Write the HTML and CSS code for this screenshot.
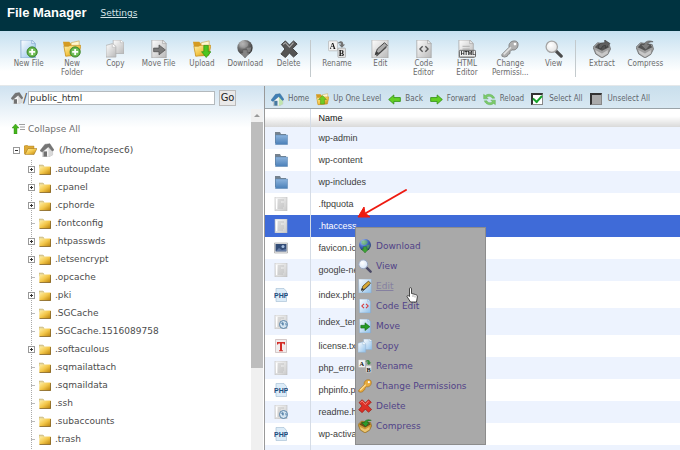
FILE: index.html
```html
<!DOCTYPE html>
<html lang="en">
<head>
<meta charset="utf-8">
<title>File Manager</title>
<link rel="stylesheet" href="styles.css">
</head>
<body>
<svg class="defs" aria-hidden="true">
  <defs>
    <linearGradient id="gPage" x1="0" y1="0" x2="1" y2="1"><stop offset="0" stop-color="#fdfeff"/><stop offset="1" stop-color="#8fc0ea"/></linearGradient>
    <linearGradient id="gGold" x1="0" y1="0" x2="1" y2="1"><stop offset="0" stop-color="#fff0a8"/><stop offset=".5" stop-color="#f3c74a"/><stop offset="1" stop-color="#b98009"/></linearGradient>
    <linearGradient id="gBlue" x1="0" y1="0" x2="0" y2="1"><stop offset="0" stop-color="#8db4dd"/><stop offset="1" stop-color="#4a7fb8"/></linearGradient>
    <linearGradient id="gDoc" x1="0" y1="0" x2="1" y2="1"><stop offset="0" stop-color="#f8f8f8"/><stop offset="1" stop-color="#cacaca"/></linearGradient>
    <radialGradient id="gGlobe" cx=".35" cy=".25" r=".8"><stop offset="0" stop-color="#c9dcff"/><stop offset=".45" stop-color="#4a70cc"/><stop offset="1" stop-color="#1b3266"/></radialGradient>
    <radialGradient id="gLens" cx=".4" cy=".35" r=".7"><stop offset="0" stop-color="#fff"/><stop offset="1" stop-color="#d3e3f8"/></radialGradient>
  </defs>
  <symbol id="page" viewBox="0 0 20 20"><path d="M2 0h12l4 4v16H2z" fill="url(#gPage)" stroke="#7fa6cd" stroke-width=".8"/><path d="M14 0v4h4z" fill="#e8f2fb" stroke="#7fa6cd" stroke-width=".7"/></symbol>
  <symbol id="plus" viewBox="0 0 20 20"><circle cx="13.500" cy="13.300" r="5.700" fill="#5cab45" stroke="#3a8428"/><circle cx="13.500" cy="13.300" r="4.200" fill="#77c25e"/><path d="M13.500 10v6.600M10.200 13.300h6.600" stroke="#fff" stroke-width="2"/></symbol>
  <symbol id="newfile" viewBox="0 0 20 20"><use href="#page" x="-1"/><use href="#plus"/></symbol>
  <symbol id="goldopen" viewBox="0 0 20 20"><path d="M0 2h7l1.500 2H15v3h4l-3 10L3 18z" fill="#d59b21"/><path d="M9 3l9-2v8l-9 4z" fill="#fff6ce" stroke="#c99b35" stroke-width=".6"/><path d="M3 18L1 7l5 0 2-1h12l-2.500 11z" fill="url(#gGold)" stroke="#c18a1c" stroke-width=".7"/></symbol>
  <symbol id="newfolder" viewBox="0 0 20 20"><use href="#goldopen"/><use href="#plus"/></symbol>
  <symbol id="upload" viewBox="0 0 20 20"><use href="#goldopen"/><path d="M12 6h5v7h3l-5.300 6.500L9.500 13H12z" fill="#4cc51f" stroke="#2a8c0c" stroke-width=".7"/></symbol>
  <symbol id="copy" viewBox="0 0 20 20"><path d="M8 0h8l4 3v12H8z" fill="url(#gPage)" stroke="#8fb1d2" stroke-width=".8"/><path d="M0 6l7-2 4 3v12H0z" fill="url(#gPage)" stroke="#8fb1d2" stroke-width=".8"/><path d="M7 4v4h4M16 0v3h4" fill="#fff" stroke="#8fb1d2" stroke-width=".6"/></symbol>
  <symbol id="move" viewBox="0 0 20 20"><use href="#page"/><path d="M4 9h6V5.500L17 11l-7 5.500V13H4z" fill="#269b25" stroke="#14630f" stroke-width=".8"/></symbol>
  <symbol id="download" viewBox="0 0 20 20"><circle cx="10" cy="8.500" r="8.500" fill="url(#gGlobe)"/><path d="M5 3c3-2 7-1 9 0l-1 4-4 2-4-2zM12 9l5-1-1 5-4 2z" fill="#62b84c" opacity=".6"/><path d="M7.500 11h5v3.500H15L10 20l-5-5.500h2.500z" fill="#3fa236" stroke="#225e22" stroke-width=".5"/></symbol>
  <symbol id="delete" viewBox="0 0 20 20"><path d="M1.500 5L6 1l4.500 4.500L15 1l4 3.500-5 5 5.500 5.500-4.500 4-4.500-4.500L6 19.500 1 15.500 5.500 10z" fill="#dc3026" stroke="#96140e" stroke-width=".9"/><path d="M3.500 5L6 3l4.500 5L15 3" fill="none" stroke="#f6948b" stroke-width="1.200"/></symbol>
  <symbol id="rename" viewBox="0 0 20 20"><rect x=".5" y="1" width="10" height="11" rx="1" fill="#f3f3f3" stroke="#aaa" stroke-width=".7"/><rect x="11" y="9" width="8.500" height="10.500" rx="1" fill="#e2e2e2" stroke="#999" stroke-width=".7"/><path d="M11 3c3-3 6-2 6 2h2l-3.500 3.500L12 5h2.500c0-1.500-1-2-3.500-1z" fill="#348a3c"/></symbol>
  <symbol id="edit" viewBox="0 0 20 20"><path d="M1 0h18v20H1z" fill="url(#gPage)" stroke="#8aa9c8" stroke-width=".7"/><path d="M5 16l2-6 8-7 3 3-8 8z" fill="#d9aa35" stroke="#4c3a18" stroke-width="1"/><path d="M5 16l1-3 2 2zM6 18L17 8" fill="#222" stroke="#444" stroke-width="1.200"/></symbol>
  <symbol id="code" viewBox="0 0 20 20"><use href="#page"/><path d="M8.500 7L5.500 10l3 3M11.500 7l3 3-3 3" fill="none" stroke="#da3434" stroke-width="1.500"/></symbol>
  <symbol id="html" viewBox="0 0 20 20"><use href="#page" x="-1"/><path d="M5 7h8M5 10h8" stroke="#aaa"/><rect x="1.500" y="11.500" width="18" height="7.500" rx="1" fill="#eee" stroke="#555"/></symbol>
  <symbol id="key" viewBox="0 0 20 20"><path d="M1 16L9 8C8 4 11 1 15 1c3 0 4 2 4 4 0 4-3 7-7 6l-2 2v2l-2 1-1 2-3 1-3-1z" fill="#e8ab3d" stroke="#9f6813" stroke-width=".8"/><circle cx="15.500" cy="4.500" r="1.500" fill="#fff"/><path d="M3 16l8-8" stroke="#ffe09a" stroke-width="1.800"/></symbol>
  <symbol id="view" viewBox="0 0 20 20"><path d="M11.500 11.500L18 18" stroke="#4a4a66" stroke-width="3.500" stroke-linecap="round"/><circle cx="7.500" cy="7.500" r="6.300" fill="url(#gLens)" stroke="#98a5c0" stroke-width="1.400"/></symbol>
  <symbol id="box" viewBox="0 0 20 20"><path d="M0 8l5-5 13 2 1.500 5-3 6-6.500 4L3 15.500z" fill="#cd9a35" stroke="#7b5812" stroke-width=".7"/><path d="M2 8l8 4 8-4-2-3-10-1z" fill="#6f4f1a"/><path d="M2.500 11l7.500 4 6.500-4v4l-6.500 4-6-4z" fill="#ecc673"/></symbol>
  <symbol id="compress" viewBox="0 0 20 20"><use href="#box"/><path d="M19 2c-4-2-9-1-10 3H5l6 6 5-6h-3c0-2 2-3 6-3z" fill="#2d9a2c" stroke="#155f14" stroke-width=".6"/></symbol>
  <symbol id="extract" viewBox="0 0 20 20"><use href="#box"/><path d="M6 9c0-5 3-6 7-6V0l6 4-5 5V6c-3 0-4 1-5 4z" fill="#2a7528" stroke="#123b12" stroke-width=".6"/></symbol>
  <symbol id="home" viewBox="0 0 20 20"><path d="M4 9l8-5 6 5v8l-6 3H4z" fill="#f4f4f4" stroke="#9b9b9b" stroke-width=".7"/><path d="M12 5l6 5v7l-6 3z" fill="#bfe5ae"/><path d="M0 11L7 2l7-1 6 9-2.500 1.500L12 5.500 3 13z" fill="#3f7fb5" stroke="#2c6190" stroke-width=".6"/><path d="M5 12h5v7.500H5z" fill="#45799f"/></symbol>
  <symbol id="back" viewBox="0 0 20 20"><path d="M1 10l8-7v4h10v6H9v4z" fill="#62cf25" stroke="#2d8e10" stroke-width="1.200"/></symbol>
  <symbol id="forward" viewBox="0 0 20 20"><path d="M19 10l-8-7v4H1v6h10v4z" fill="#62cf25" stroke="#2d8e10" stroke-width="1.200"/></symbol>
  <symbol id="up" viewBox="0 0 20 20"><use href="#goldopen"/><path d="M10 4l6 6h-3v7H7v-7H4z" fill="#70cb25" stroke="#4a9616" stroke-width=".8"/></symbol>
  <symbol id="reload" viewBox="0 0 20 20"><path d="M1 2v7h7L5.500 6.500C9 4 13 5 14 8h4C16 2 8 0 3.500 4zM19 18v-7h-7l2.500 2.500C11 16 7 15 6 12H2c2 6 10 8 14.500 4z" fill="#7cca6a" stroke="#4ea445" stroke-width=".6"/></symbol>
  <symbol id="collapse" viewBox="0 0 13 10"><path d="M3.500 0L7 4H5v6H2V4H0z" fill="#46b51c" stroke="#27830d" stroke-width=".4"/><path d="M7 .5h6M8 3h5M8 5.500h5" stroke="#888" stroke-width=".8"/></symbol>
  <symbol id="folder" viewBox="0 0 12 11"><path d="M0 1h4l1 1v2H0z" fill="#e0d29c" stroke="#b3a05c" stroke-width=".4"/><path d="M.3 2.500h11.400v8H.3z" fill="url(#gGold)"/><path d="M11.600 3v7.600H.5" fill="none" stroke="#775614" stroke-width=".8"/></symbol>
  <symbol id="openfolder" viewBox="0 0 13 10"><path d="M0 9V1l3-1 1 1h6v3z" fill="#dca936" stroke="#a6791a" stroke-width=".4"/><path d="M1 9.600L4 3.500h9L10 9.600z" fill="url(#gGold)" stroke="#9b6d10" stroke-width=".5"/></symbol>
  <symbol id="bluefolder" viewBox="0 0 14 14"><path d="M1 1h5l1 2h5v9H1z" fill="#76828e"/><path d="M1.500 4h12v9.500H1.500z" fill="url(#gBlue)" stroke="#5581ad" stroke-width=".5"/></symbol>
  <symbol id="doc" viewBox="0 0 14 14"><path d="M1 0h12v14H1z" fill="url(#gDoc)" stroke="#bdbdbd" stroke-width=".6"/><path d="M4 3h6M4 5h3M4 7h6M4 9h6M4 11h5" stroke="#b4b4b4" stroke-width=".7"/><path d="M2.500 2v10" stroke="#fff"/></symbol>
  <symbol id="image" viewBox="0 0 14 14"><path d="M.5 2h13v10H.5z" fill="#eee" stroke="#999" stroke-width=".6"/><path d="M1.500 3h11v7.500h-11z" fill="#334c76"/><circle cx="9" cy="5.500" r="1.500" fill="#a6bfe1"/><path d="M2 10l3-3 3 2 4-1v2z" fill="#627aa5"/></symbol>
  <symbol id="phpdoc" viewBox="0 0 14 14"><path d="M2 .5h8l2.500 3v10H2z" fill="#dcecf8" stroke="#9fbbd1" stroke-width=".6"/></symbol>
  <symbol id="webdoc" viewBox="0 0 14 14"><use href="#doc"/><circle cx="9.500" cy="9.500" r="4" fill="#d5e5f1" stroke="#5983a9"/><path d="M7 8l2-1 1 2-1 2zM11 8l2 1-1 2z" fill="#5d87ad"/></symbol>
  <symbol id="textdoc" viewBox="0 0 14 14"><path d="M1.500.5h11v13h-11z" fill="#f2eded" stroke="#b9a9a9" stroke-width=".6"/><path d="M3 3h8v2.500h-1L9.500 4.500H8V11l1 .5v.7H5v-.7L6 11V4.500H4.500L4 5.500H3z" fill="#d32e28"/></symbol>
</svg>

<header class="masthead"><h1>File Manager</h1><a href="#settings">Settings</a></header>

<nav class="toolbar" aria-label="File actions">
  <div class="group seven">
    <button><svg><use href="#newfile"/></svg><span>New File</span></button>
    <button><svg><use href="#newfolder"/></svg><span>New<br>Folder</span></button>
    <button class="off"><svg><use href="#copy"/></svg><span>Copy</span></button>
    <button class="off"><svg><use href="#move"/></svg><span>Move File</span></button>
    <button><svg><use href="#upload"/></svg><span>Upload</span></button>
    <button class="off"><svg><use href="#download"/></svg><span>Download</span></button>
    <button class="off"><svg><use href="#delete"/></svg><span>Delete</span></button>
  </div>
  <div class="rule"></div>
  <div class="group six">
    <button class="off"><svg viewBox="0 0 20 20"><use href="#rename"/><text x="2" y="10" class="serif">A</text><text x="12" y="18" class="serif">B</text></svg><span>Rename</span></button>
    <button class="off"><svg><use href="#edit"/></svg><span>Edit</span></button>
    <button class="off"><svg><use href="#code"/></svg><span>Code<br>Editor</span></button>
    <button class="off"><svg viewBox="0 0 20 20"><use href="#html"/><text x="3" y="17" class="tag">HTML</text></svg><span>HTML<br>Editor</span></button>
    <button class="off"><svg><use href="#key"/></svg><span>Change<br>Permissi...</span></button>
    <button class="off"><svg><use href="#view"/></svg><span>View</span></button>
  </div>
  <div class="rule"></div>
  <div class="group two">
    <button class="off"><svg><use href="#extract"/></svg><span>Extract</span></button>
    <button class="off"><svg><use href="#compress"/></svg><span>Compress</span></button>
  </div>
</nav>

<div class="panes">
  <aside class="side">
    <form class="path">
      <label for="dir"><svg class="gray"><use href="#home"/></svg>/</label>
      <input id="dir" type="text" value="public_html">
      <button type="button">Go</button>
    </form>
    <div class="treewrap">
      <div class="treearea">
        <a class="collapse" href="#collapse"><svg><use href="#collapse"/></svg>Collapse All</a>
        <div class="root"><button class="toggle" aria-label="Collapse home"></button><svg class="open"><use href="#openfolder"/></svg><svg class="house gray"><use href="#home"/></svg><span>(/home/topsec6)</span></div>
        <ul class="tree">
          <li><button class="toggle more" aria-label="Expand"></button><svg><use href="#folder"/></svg>.autoupdate</li>
          <li><button class="toggle more" aria-label="Expand"></button><svg><use href="#folder"/></svg>.cpanel</li>
          <li><button class="toggle more" aria-label="Expand"></button><svg><use href="#folder"/></svg>.cphorde</li>
          <li><i></i><svg><use href="#folder"/></svg>.fontconfig</li>
          <li><button class="toggle more" aria-label="Expand"></button><svg><use href="#folder"/></svg>.htpasswds</li>
          <li><button class="toggle more" aria-label="Expand"></button><svg><use href="#folder"/></svg>.letsencrypt</li>
          <li><i></i><svg><use href="#folder"/></svg>.opcache</li>
          <li><button class="toggle more" aria-label="Expand"></button><svg><use href="#folder"/></svg>.pki</li>
          <li><i></i><svg><use href="#folder"/></svg>.SGCache</li>
          <li><i></i><svg><use href="#folder"/></svg>.SGCache.1516089758</li>
          <li><button class="toggle more" aria-label="Expand"></button><svg><use href="#folder"/></svg>.softaculous</li>
          <li><i></i><svg><use href="#folder"/></svg>.sqmailattach</li>
          <li><i></i><svg><use href="#folder"/></svg>.sqmaildata</li>
          <li><i></i><svg><use href="#folder"/></svg>.ssh</li>
          <li><i></i><svg><use href="#folder"/></svg>.subaccounts</li>
          <li><i></i><svg><use href="#folder"/></svg>.trash</li>
        </ul>
      </div>
      <div class="scroll"><div class="arrow"></div><div class="thumb"></div></div>
    </div>
  </aside>

  <main class="files">
    <nav class="minibar" aria-label="Navigation">
      <a href="#home"><svg><use href="#home"/></svg>Home</a>
      <a href="#up"><svg><use href="#up"/></svg>Up One Level</a>
      <a href="#back"><svg><use href="#back"/></svg>Back</a>
      <a href="#forward"><svg><use href="#forward"/></svg>Forward</a>
      <a href="#reload"><svg><use href="#reload"/></svg>Reload</a>
      <label><input type="checkbox" checked>Select All</label>
      <label><input type="checkbox">Unselect All</label>
    </nav>
    <table>
      <thead><tr><th class="ico"></th><th>Name</th></tr></thead>
      <tbody>
        <tr><td class="ico"><svg><use href="#bluefolder"/></svg></td><td>wp-admin</td></tr>
        <tr><td class="ico"><svg><use href="#bluefolder"/></svg></td><td>wp-content</td></tr>
        <tr><td class="ico"><svg><use href="#bluefolder"/></svg></td><td>wp-includes</td></tr>
        <tr><td class="ico"><svg><use href="#doc"/></svg></td><td>.ftpquota</td></tr>
        <tr class="selected"><td class="ico"><svg><use href="#doc"/></svg></td><td>.htaccess</td></tr>
        <tr><td class="ico"><svg><use href="#image"/></svg></td><td>favicon.ico</td></tr>
        <tr><td class="ico"><svg><use href="#doc"/></svg></td><td>google-ne</td></tr>
        <tr class="tall"><td class="ico"><svg viewBox="0 0 14 14"><use href="#phpdoc"/><text x="0" y="10" class="phptext">PHP</text></svg></td><td>index.php</td></tr>
        <tr class="tall"><td class="ico"><svg><use href="#webdoc"/></svg></td><td>index_tem</td></tr>
        <tr><td class="ico"><svg><use href="#textdoc"/></svg></td><td>license.txt</td></tr>
        <tr><td class="ico"><svg><use href="#doc"/></svg></td><td>php_error</td></tr>
        <tr><td class="ico"><svg viewBox="0 0 14 14"><use href="#phpdoc"/><text x="0" y="10" class="phptext">PHP</text></svg></td><td>phpinfo.p</td></tr>
        <tr><td class="ico"><svg><use href="#webdoc"/></svg></td><td>readme.h</td></tr>
        <tr><td class="ico"><svg viewBox="0 0 14 14"><use href="#phpdoc"/><text x="0" y="10" class="phptext">PHP</text></svg></td><td>wp-activa</td></tr>
        <tr><td class="ico"></td><td></td></tr>
      </tbody>
    </table>

    <div class="menu">
      <a href="#m1"><svg><use href="#download"/></svg>Download</a>
      <a href="#m2"><svg><use href="#view"/></svg>View</a>
      <a href="#m3" class="hover"><svg><use href="#edit"/></svg>Edit</a>
      <a href="#m4"><svg><use href="#code"/></svg>Code Edit</a>
      <a href="#m5"><svg><use href="#move"/></svg>Move</a>
      <a href="#m6"><svg><use href="#copy"/></svg>Copy</a>
      <a href="#m7"><svg viewBox="0 0 20 20"><use href="#rename"/><text x="2" y="10" class="serif">A</text><text x="12" y="18" class="serif">B</text></svg>Rename</a>
      <a href="#m8"><svg><use href="#key"/></svg>Change Permissions</a>
      <a href="#m9"><svg><use href="#delete"/></svg>Delete</a>
      <a href="#m10"><svg><use href="#compress"/></svg>Compress</a>
    </div>
    <svg class="pointer" viewBox="0 0 52 32"><path d="M50 2L10 25" stroke="#ee1a10" stroke-width="2" stroke-linecap="round"/><path d="M2 29L8 19l1 6 5 4z" fill="#ee1a10" stroke="#ee1a10" stroke-linejoin="round"/></svg>
    <svg class="cursor" viewBox="0 0 12 16"><path d="M3.500 1.500c0-1 2-1 2 0v5l4 1c1.500.4 2 1 1.800 2.500L10.500 15h-6L1 9.500c0-1.200 1.200-1.200 2.500 0z" fill="#fff" stroke="#222" stroke-width=".8"/><path d="M7 8v2M9 8.500v2" stroke="#555" stroke-width=".5"/></svg>
  </main>
</div>
</body>
</html>
```
FILE: styles.css
```css
* { box-sizing: border-box; }
body {
  margin: 0;
  height: 100vh;
  display: flex;
  flex-direction: column;
  overflow: hidden;
  background: #fff;
  font: 9px/12px "DejaVu Sans", sans-serif;
  color: #4c4c4c;
}
button { font: inherit; color: inherit; border: 0; padding: 0; background: none; }
a { color: inherit; text-decoration: none; }
svg { display: block; flex: none; }
.defs { position: absolute; width: 0; height: 0; }
.serif { font: bold 9px "Liberation Serif", serif; fill: #111; }
.tag { font: bold 6px "Liberation Sans", sans-serif; fill: #111; }
.phptext { font: bold 7px "Liberation Sans", sans-serif; fill: #1c4d7d; }
.gray, .off svg { filter: grayscale(1); }

.masthead {
  flex: none;
  display: flex;
  align-items: center;
  gap: 14px;
  padding: 4px 7px 9px;
  background: #003340;
  color: #fff;
}
.masthead h1 { margin: 0; font: bold 13px/18px "Liberation Sans", sans-serif; }
.masthead a { color: #d5e2e6; text-decoration: underline; }

.toolbar {
  flex: none;
  display: flex;
  padding: 9px 13px 8px 7px;
  background: linear-gradient(#c5e0f0, #fff 75%);
  border-bottom: 1px solid #e4e8ea;
  font: 8px/9px "DejaVu Sans Condensed", "Noto Sans", sans-serif;
  color: #6b6b6b;
}
.group { display: flex; min-width: 0; }
.group button { flex: 1 1 0; min-width: 0; display: flex; flex-direction: column; align-items: center; gap: 1px; white-space: nowrap; }
.group svg { width: 18px; height: 18px; }
.seven { flex: 7 1 0; }
.six { flex: 6 1 0; }
.two { flex: 2 1 0; }
.rule { width: 1px; margin-right: 4px; background: #c3cacd; }

.panes { flex: 1; min-height: 0; display: flex; }
.side {
  flex: none;
  width: 264px;
  display: flex;
  flex-direction: column;
  background: linear-gradient(#cfe2f0, #fff 42px);
}
.path { display: flex; align-items: center; gap: 1px; padding: 4px 28px 3px 11px; }
.path label { display: flex; align-items: center; font-size: 12px; }
.path svg { width: 12px; height: 12px; }
.path input {
  flex: 1;
  min-width: 0;
  height: 14px;
  border: 1px solid #b3b9bd;
  padding: 0 1px;
  font: inherit;
  color: #333;
  background: #fff;
}
.path button {
  width: 17px;
  height: 16px;
  margin-left: 3px;
  border: 1px solid #bbb;
  background: #e9e9e9;
  color: #222;
  font: 11px/14px "DejaVu Sans Condensed", "Noto Sans", sans-serif;
}
.treewrap { flex: 1; min-height: 0; display: flex; }
.treearea { flex: 1; overflow: hidden; padding: 14px 0 0 12px; }
.collapse { display: flex; align-items: center; gap: 3px; color: #707070; }
.collapse svg { width: 13px; height: 10px; }
.root { display: flex; align-items: center; height: 18px; margin: 6px 0 1px 1px; }
.root .open { width: 13px; height: 10px; margin: 0 3px 0 4px; }
.root .house { width: 14px; height: 14px; margin-right: 5px; }
.toggle {
  flex: none;
  width: 7px;
  height: 7px;
  border: 1px solid #999;
  background: linear-gradient(#333, #333) center / 3px 1px no-repeat, #fff;
}
.toggle.more {
  background: linear-gradient(#333, #333) center / 3px 1px no-repeat, linear-gradient(#333, #333) center / 1px 3px no-repeat, #fff;
}
.tree {
  list-style: none;
  margin: 0;
  padding: 0 0 40px 16px;
  background: repeating-linear-gradient(#aaa 0 1px, transparent 1px 2px) 19px 0 / 1px 100% no-repeat;
}
.tree li { display: flex; align-items: center; height: 18px; white-space: nowrap; }
.tree svg { width: 12px; height: 11px; margin: 0 4px; }
.tree i { width: 7px; height: 1px; background: linear-gradient(90deg, transparent 3px, #bbb 3px); }
.scroll { width: 12px; margin-right: 1px; background: #f0f0f0; }
.arrow { height: 13px; display: grid; place-items: center; }
.arrow::before { content: ""; border: 3px solid transparent; border-top: 0; border-bottom: 3px solid #999; }
.thumb { height: 72%; background: #bdbdbd; }

.files { position: relative; flex: 1; min-width: 0; border-left: 1px solid #999; }
.minibar {
  display: flex;
  align-items: center;
  gap: 7px;
  height: 23px;
  padding: 4px 6px 0;
  background: linear-gradient(#c9dfec, #d8e8f2);
  border-bottom: 1px solid #9aa3a8;
  font: 8px/12px "DejaVu Sans Condensed", "Noto Sans", sans-serif;
  color: #5f666c;
  white-space: nowrap;
}
.minibar a, .minibar label { display: flex; align-items: center; gap: 4px; }
.minibar label { gap: 6px; }
.minibar svg { width: 13px; height: 13px; }
.minibar input {
  appearance: none;
  width: 12px;
  height: 12px;
  margin: 0;
  border: 1px solid #888;
  border-top: 2px solid #333;
  border-left: 2px solid #333;
  background: #aaa;
  display: grid;
  place-items: center;
}
.minibar input:checked { background: #fff; }
.minibar input:checked::before {
  content: "";
  width: 7px;
  height: 4px;
  margin-bottom: 3px;
  border: solid #16a32a;
  border-width: 0 0 2px 2px;
  transform: rotate(-48deg);
}

table { width: 100%; border-collapse: collapse; font: 9px/12px "Liberation Sans", sans-serif; color: #3c3c3c; }
th { height: 18px; padding: 0 8px; text-align: left; font-weight: normal; color: #111; background: linear-gradient(#fff 40%, #d9d9d9); }
td { height: 22px; padding: 0 8px; }
.tall td { height: 27px; }
.ico { width: 45px; padding: 0 9px; border-right: 1px solid #d5dce6; }
.ico svg { width: 14px; height: 14px; }
tbody tr:nth-child(odd) { background: #edf3fe; }
tbody tr.selected { background: #3f6bd8; color: #fff; }

.menu {
  position: absolute;
  left: 90px;
  top: 141px;
  width: 131px;
  padding: 8px 2px;
  background: #a9a9a9;
  border: 1px solid #8c8c8c;
  color: #514388;
}
.menu a { display: flex; align-items: center; gap: 4px; height: 20px; white-space: nowrap; }
.menu svg { width: 14px; height: 14px; }
.menu .hover { color: #8580a0; text-decoration: underline; }
.pointer { position: absolute; left: 91px; top: 102px; width: 52px; height: 32px; }
.cursor { position: absolute; left: 141px; top: 201px; width: 12px; height: 16px; }
```
